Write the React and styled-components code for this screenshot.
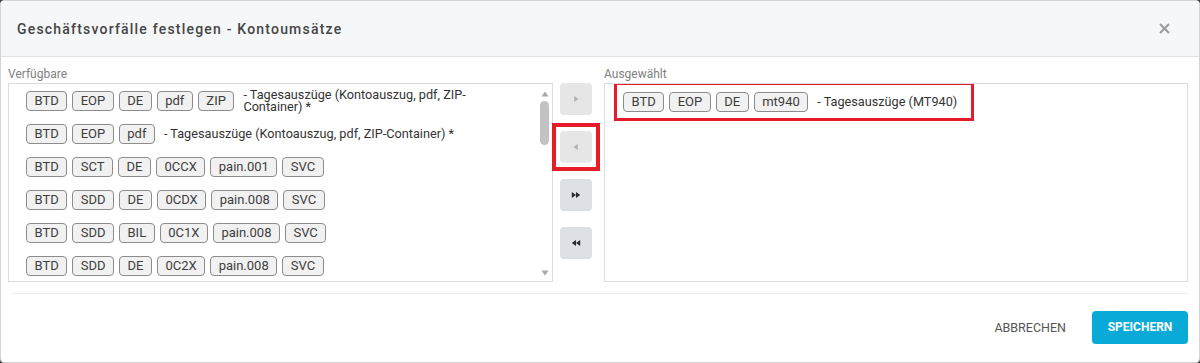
import React from "react";
import styled, { createGlobalStyle } from "styled-components";

const GlobalStyle = createGlobalStyle`
  html, body {
    margin: 0;
    padding: 0;
    background: #3a3a3a;
    font-family: Roboto, "Liberation Sans", sans-serif;
  }
`;

const available = [
  { tags: ["BTD", "EOP", "DE", "pdf", "ZIP"], text: "- Tagesauszüge (Kontoauszug, pdf, ZIP-Container) *" },
  { tags: ["BTD", "EOP", "pdf"], text: "- Tagesauszüge (Kontoauszug, pdf, ZIP-Container) *" },
  { tags: ["BTD", "SCT", "DE", "0CCX", "pain.001", "SVC"] },
  { tags: ["BTD", "SDD", "DE", "0CDX", "pain.008", "SVC"] },
  { tags: ["BTD", "SDD", "BIL", "0C1X", "pain.008", "SVC"] },
  { tags: ["BTD", "SDD", "DE", "0C2X", "pain.008", "SVC"] },
];

const selected = [
  { tags: ["BTD", "EOP", "DE", "mt940"], text: "- Tagesauszüge (MT940)" },
];

const Triangle = ({ dir, color }) => (
  <svg width="8" height="8" viewBox="0 0 8 8">
    {dir === "right" ? (
      <path d="M2.2 0.8 L6.4 4 L2.2 7.2 Z" fill={color} />
    ) : (
      <path d="M5.8 0.8 L1.6 4 L5.8 7.2 Z" fill={color} />
    )}
  </svg>
);

const Double = ({ dir }) => (
  <svg width="10" height="8" viewBox="0 0 10 8">
    {dir === "right" ? (
      <path d="M0.8 1 L5 4 L0.8 7 Z M5 1 L9.2 4 L5 7 Z" fill="#2b2b2b" />
    ) : (
      <path d="M9.2 1 L5 4 L9.2 7 Z M5 1 L0.8 4 L5 7 Z" fill="#2b2b2b" />
    )}
  </svg>
);

const Entry = ({ item, marked }) => (
  <Row marked={marked ? 1 : 0}>
    <Tags>
      {item.tags.map((t, i) => (
        <Tag key={i}>{t}</Tag>
      ))}
    </Tags>
    {item.text && <RowText>{item.text}</RowText>}
  </Row>
);

const App = () => {
  return (
    <>
      <GlobalStyle />
      <Dialog>
        <Header>
          <Title>Geschäftsvorfälle festlegen - Kontoumsätze</Title>
          <CloseBtn aria-label="close">
            <svg width="11" height="11" viewBox="0 0 11 11">
              <path d="M1 1 L10 10 M10 1 L1 10" stroke="#9a9a9a" strokeWidth="2" />
            </svg>
          </CloseBtn>
        </Header>
        <Body>
          <Column width={545}>
            <Label>Verfügbare</Label>
            <ListBox>
              <ListContent>
                {available.map((item, i) => (
                  <Entry key={i} item={item} />
                ))}
              </ListContent>
              <ScrollTrack>
                <svg width="8" height="6" viewBox="0 0 8 6">
                  <path d="M0.5 5.5 L4 0.5 L7.5 5.5 Z" fill="#a8a8a8" />
                </svg>
                <Thumb />
                <svg width="8" height="6" viewBox="0 0 8 6">
                  <path d="M0.5 0.5 L4 5.5 L7.5 0.5 Z" fill="#a8a8a8" />
                </svg>
              </ScrollTrack>
            </ListBox>
          </Column>
          <Mover>
            <MoveBtn disabled>
              <Triangle dir="right" color="#b3b3b3" />
            </MoveBtn>
            <Highlight>
              <MoveBtn disabled>
                <Triangle dir="left" color="#b3b3b3" />
              </MoveBtn>
            </Highlight>
            <MoveBtn>
              <Double dir="right" />
            </MoveBtn>
            <MoveBtn>
              <Double dir="left" />
            </MoveBtn>
          </Mover>
          <Column width={584}>
            <Label>Ausgewählt</Label>
            <ListBox right>
              <ListContent right>
                {selected.map((item, i) => (
                  <Entry key={i} item={item} marked />
                ))}
              </ListContent>
            </ListBox>
          </Column>
        </Body>
        <Footer>
          <FlatBtn>Abbrechen</FlatBtn>
          <PrimaryBtn>Speichern</PrimaryBtn>
        </Footer>
      </Dialog>
    </>
  );
};

const Dialog = styled.div`
  box-sizing: border-box;
  width: 1200px;
  height: 363px;
  background: #fff;
  border: 1px solid #d4d4d4;
  border-radius: 4px;
  overflow: hidden;
  display: flex;
  flex-direction: column;
`;

const Header = styled.div`
  height: 55px;
  flex: none;
  display: flex;
  align-items: center;
  justify-content: space-between;
  padding: 0 29px 0 16px;
  background: #f6f7f9;
  border-bottom: 1px solid #e2e2e2;
`;

const Title = styled.div`
  font-size: 14px;
  font-weight: 500;
  letter-spacing: 1.2px;
  color: #454545;
`;

const CloseBtn = styled.button`
  border: none;
  background: none;
  padding: 0;
  display: flex;
  cursor: pointer;
`;

const Body = styled.div`
  display: flex;
  padding: 8px 11px 0 7px;
`;

const Column = styled.div`
  width: ${(p) => p.width}px;
  display: flex;
  flex-direction: column;
`;

const Label = styled.div`
  font-size: 12px;
  line-height: 18px;
  color: #808080;
`;

const ListBox = styled.div`
  box-sizing: border-box;
  height: 199px;
  border: 1px solid #dcdcdc;
  display: flex;
`;

const ListContent = styled.div`
  flex: 1;
  overflow: hidden;
  padding: ${(p) => (p.right ? "1px 0 0 12px" : "0 37px 0 17px")};
`;

const ScrollTrack = styled.div`
  width: 15px;
  flex: none;
  display: flex;
  flex-direction: column;
  align-items: center;
  justify-content: space-between;
  padding: 7px 0 5px;
  box-sizing: border-box;
  & > svg {
    flex: none;
  }
`;

const Thumb = styled.div`
  width: 9px;
  height: 44px;
  margin-top: 4px;
  border-radius: 5px;
  background: #c2c2c2;
  margin-bottom: auto;
`;

const Row = styled.div`
  box-sizing: border-box;
  height: 33px;
  display: ${(p) => (p.marked ? "inline-flex" : "flex")};
  align-items: center;
  gap: 9px;
  padding: ${(p) => (p.marked ? "0 14px 0 6px" : "0")};
  outline: ${(p) => (p.marked ? "3px solid #e51d2a" : "none")};
`;

const Tags = styled.div`
  display: flex;
  gap: 5px;
  flex: none;
`;

const Tag = styled.span`
  box-sizing: border-box;
  height: 20px;
  line-height: 18px;
  padding: 0 7.5px;
  font-size: 13px;
  color: #3d3d3d;
  background: #f1f1f1;
  border: 1px solid #8c8c8c;
  border-radius: 4px;
`;

const RowText = styled.span`
  font-size: 12.7px;
  line-height: 12px;
  color: #333;
`;

const Mover = styled.div`
  width: 32px;
  margin: 18px 12px 0 7px;
  display: flex;
  flex-direction: column;
  gap: 16px;
`;

const Highlight = styled.div`
  margin: -8px;
  padding: 4px;
  border: 4px solid #e51d2a;
`;

const MoveBtn = styled.button`
  width: 32px;
  height: 32px;
  padding: 0;
  border: none;
  border-radius: 4px;
  display: flex;
  align-items: center;
  justify-content: center;
  background: ${(p) => (p.disabled ? "#e6e6e6" : "#dde0e4")};
`;

const Footer = styled.div`
  margin: 11px 11px 0 11px;
  border-top: 1px solid #ececec;
  flex: 1;
  display: flex;
  align-items: center;
  justify-content: flex-end;
  gap: 14px;
  padding-bottom: 2px;
`;

const FlatBtn = styled.button`
  border: none;
  background: none;
  padding: 0 12px;
  height: 33px;
  font-family: Roboto, "Liberation Sans", sans-serif;
  font-size: 12.5px;
  text-transform: uppercase;
  color: #555;
  cursor: pointer;
`;

const PrimaryBtn = styled.button`
  width: 96px;
  height: 33px;
  border: none;
  border-radius: 4px;
  background: #0aaad8;
  color: #fff;
  font-family: Roboto, "Liberation Sans", sans-serif;
  font-size: 12px;
  font-weight: 700;
  text-transform: uppercase;
  cursor: pointer;
`;

export default App;
